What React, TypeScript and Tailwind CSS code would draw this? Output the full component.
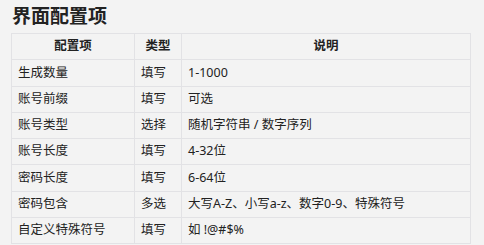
import React from "react";

const rows = [
    ["生成数量", "填写", "1-1000"],
    ["账号前缀", "填写", "可选"],
    ["账号类型", "选择", "随机字符串 / 数字序列"],
    ["账号长度", "填写", "4-32位"],
    ["密码长度", "填写", "6-64位"],
    ["密码包含", "多选", "大写A-Z、小写a-z、数字0-9、特殊符号"],
    ["自定义特殊符号", "填写", "如 !@#$%"],
];

const App = () => {
    return (
        <div
            className="w-[484px] h-[245px] overflow-hidden bg-[#f3f3f3] text-[#222] pl-[11px] pt-[3px]"
            style={{fontFamily: '"Noto Sans", "Noto Sans CJK SC", sans-serif'}}
        >
            <h2 className="text-[19px] font-bold leading-[26px] mb-[4px] pl-[1px]">界面配置项</h2>
            <table className="w-[460px] border-collapse text-[12.5px] table-fixed">
                <colgroup>
                    <col className="w-[123px]" />
                    <col className="w-[47px]" />
                    <col />
                </colgroup>
                <thead>
                    <tr className="h-[26.3px]">
                        <th className="border border-[#e2e2e5] font-semibold text-center">配置项</th>
                        <th className="border border-[#e2e2e5] font-semibold text-center">类型</th>
                        <th className="border border-[#e2e2e5] font-semibold text-center">说明</th>
                    </tr>
                </thead>
                <tbody>
                    {rows.map((r) => (
                        <tr key={r[0]} className="h-[26.3px]">
                            <td className="border border-[#e2e2e5] px-[6px] whitespace-nowrap">{r[0]}</td>
                            <td className="border border-[#e2e2e5] px-[6px] whitespace-nowrap">{r[1]}</td>
                            <td className="border border-[#e2e2e5] px-[6px] whitespace-nowrap">{r[2]}</td>
                        </tr>
                    ))}
                </tbody>
            </table>
        </div>
    );
};

export default App;
